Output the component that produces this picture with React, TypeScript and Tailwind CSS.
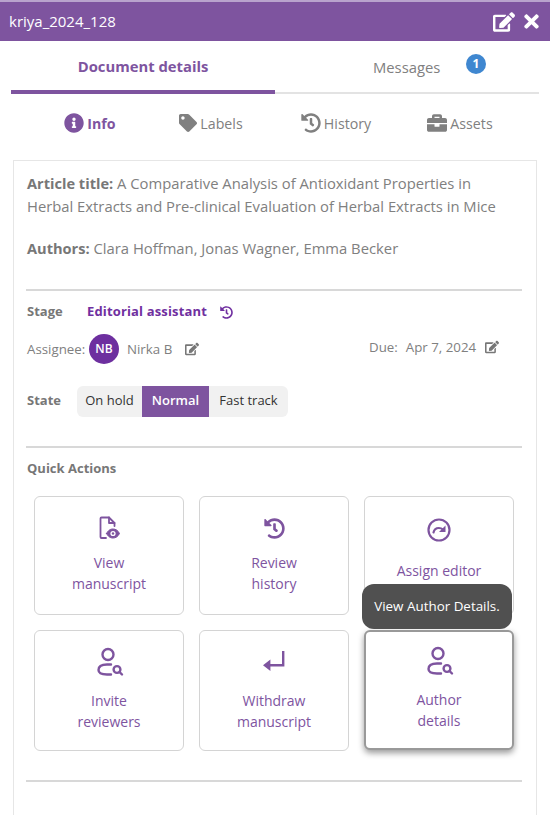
import React from "react";
import { FaEdit, FaTimes, FaInfoCircle, FaTag, FaHistory, FaBriefcase } from "react-icons/fa";

const FileEye = () => (
  <svg width="24" height="24" viewBox="0 0 24 24" fill="none" stroke="#7e549f" strokeWidth="1.800" strokeLinecap="round" strokeLinejoin="round">
    <path d="M9 22H4.500a1 1 0 0 1-1-1V2.500a1 1 0 0 1 1-1H12l5.500 5.500V10" />
    <path d="M12 1.500V7h5.500" />
    <path d="M9.500 17.500c1.700-3.300 3.800-4.500 6.500-4.500s4.800 1.200 6.500 4.500c-1.700 3.300-3.800 4.500-6.500 4.500s-4.800-1.200-6.500-4.500z" fill="#7e549f" stroke="#7e549f" strokeWidth="1" />
    <circle cx="16" cy="17.500" r="2.600" fill="#fff" stroke="none" />
    <circle cx="16" cy="17.500" r="1.200" fill="#7e549f" stroke="none" />
  </svg>
);

const UserSearch = () => (
  <svg width="30" height="30" viewBox="0 0 30 30" fill="none" stroke="#7e549f" strokeWidth="2.400" strokeLinecap="round">
    <circle cx="14" cy="7.500" r="5.500" />
    <path d="M17 17.500H13C8 17.500 4.500 19.500 4.500 23S8 27.500 13 27.500h4" />
    <circle cx="23" cy="22.500" r="3.400" />
    <path d="M25.500 25l2.500 2.500" />
  </svg>
);

const Withdraw = () => (
  <svg width="24" height="24" viewBox="0 0 24 24" fill="#7e549f">
    <path d="M20 1h2.400v15.400H8.400V21L1 15.200 8.400 9.400v4.600H20z" />
  </svg>
);

const AssignIcon = () => (
  <svg width="24" height="24" viewBox="0 0 24 24" fill="none" stroke="#7e549f" strokeWidth="2.200" strokeLinecap="round">
    <circle cx="12" cy="12" r="10.500" />
    <path d="M6.500 14.500c.7-3 2.800-4.500 5.300-4.500 1.600 0 3 .5 4.200 1.500" />
    <path d="M18.500 7.500v6.500h-6.500z" fill="#7e549f" stroke="none" />
  </svg>
);

const Divider = () => <div className="h-[2px] bg-[#d8d8d8]" />;

function Action({ icon, lines, hot, tall, single }: { icon: React.ReactNode; lines: string[]; hot?: boolean; tall?: boolean; single?: boolean }) {
  return (
    <div
      className={`flex flex-col items-center rounded-[6px] bg-white border text-[14px] leading-[21px] text-[#7e549f] ${
        hot ? "border-2 border-[#999] shadow-[0_3px_6px_rgba(0,0,0,0.4)] h-[120px]" : "border-[#d4d4d4]"
      } ${tall ? "h-[121px]" : "h-[119px]"}`}
    >
      <div className={`h-[30px] flex items-center justify-center ${hot ? "mt-[14px]" : single ? "mt-[18px]" : "mt-[16px]"}`}>{icon}</div>
      <div className={`text-center ${tall || hot ? "mt-[13px]" : single ? "mt-[15px]" : "mt-[9px]"}`}>
        {lines.map((l) => (
          <div key={l}>{l}</div>
        ))}
      </div>
    </div>
  );
}

function SubTab({ icon, label, active, width }: { icon: React.ReactNode; label: string; active?: boolean; width: string }) {
  return (
    <div className={`flex items-center justify-center gap-[3px] ${width} ${active ? "text-[#7e549f] font-bold" : "text-[#808080]"}`}>
      {icon}
      <span>{label}</span>
    </div>
  );
}

export default function App() {
  return (
    <div className="w-[550px] h-[815px] overflow-hidden bg-white font-['Open_Sans',sans-serif] flex flex-col">
      <div className="h-[2px] bg-[#b9a3cd]" />
      <div className="h-[39px] bg-[#7e549f] flex items-center justify-between pl-[9px] pr-[8px] text-white text-[15px]">
        <span>kriya_2024_128</span>
        <div className="flex items-center gap-[6px]">
          <FaEdit size={22} />
          <FaTimes size={21} />
        </div>
      </div>

      <div className="mx-[11px] mt-[1px] h-[52px] flex border-b-[2px] border-[#e3e3e3]">
        <div className="w-[264px] h-[52px] border-b-[4px] border-[#7e549f] flex items-center justify-center font-bold text-[14.800px] text-[#7e549f]">
          Document details
        </div>
        <div className="relative flex-1 flex items-center text-[14.800px] text-[#808080]">
          <span className="ml-[98px]">Messages</span>
          <span className="absolute left-[191px] top-[12px] w-[20px] h-[20px] rounded-full bg-[#3f87d0] text-white text-[12px] font-bold flex items-center justify-center">1</span>
        </div>
      </div>

      <div className="h-[66px] flex items-center pl-[30px] text-[14.200px] pb-[7px]">
        <SubTab width="w-[120px]" active label="Info" icon={<FaInfoCircle size={20} />} />
        <SubTab width="w-[122px]" label="Labels" icon={<FaTag size={18} />} />
        <SubTab width="w-[128px]" label="History" icon={<FaHistory size={20} />} />
        <SubTab width="w-[120px]" label="Assets" icon={<FaBriefcase size={20} />} />
      </div>

      <div className="mx-[13px] flex-1 border border-b-0 border-[#e6e6e6] pl-[12px] pr-[14px] pt-[11px]">
        <div className="pl-[1px] pr-[10px] text-[14.800px] leading-[23px] text-[#808080] font-normal">
          <p>
            <b className="font-bold text-[14.600px] text-[#777]">Article title:</b> A Comparative Analysis of Antioxidant Properties in Herbal Extracts and Pre-clinical Evaluation of Herbal Extracts in Mice
          </p>
          <p className="mt-[19px]">
            <b className="font-bold text-[14.600px] text-[#777]">Authors:</b> Clara Hoffman, Jonas Wagner, Emma Becker
          </p>
        </div>

        <div className="mt-[29px]"><Divider /></div>

        <div className="pl-[1px] mt-[12px] flex items-center text-[13px] font-bold h-[18px]">
          <span className="w-[60px] text-[#777]">Stage</span>
          <span className="text-[#7030a0] tracking-[0.15px]">Editorial assistant</span>
          <FaHistory size={13} className="ml-[13px] text-[#7030a0]" />
        </div>

        <div className="pl-[1px] mt-[13px] flex items-start text-[13.300px] text-[#808080] h-[32px]">
          <span className="mt-[6px] w-[62px]">Assignee:</span>
          <span className="w-[30px] h-[30px] rounded-full bg-[#6d2f9f] text-white text-[12px] font-semibold flex items-center justify-center">NB</span>
          <span className="ml-[8px] mt-[6px] w-[58px]">Nirka B</span>
          <FaEdit size={14} className="mt-[8px] text-[#777]" />
          <span className="ml-[170px] mt-[4px]">Due:</span>
          <span className="ml-[8px] mt-[4px]">Apr 7, 2024</span>
          <FaEdit size={14} className="ml-[9px] mt-[6px] text-[#777]" />
        </div>

        <div className="pl-[1px] mt-[19px] flex items-center h-[32px]">
          <span className="w-[50px] text-[13px] font-bold text-[#777]">State</span>
          <div className="flex h-[31px] rounded-[6px] bg-[#f1f1f1] overflow-hidden text-[13px] text-[#333]">
            <span className="w-[65px] flex items-center justify-center">On hold</span>
            <span className="w-[67px] flex items-center justify-center bg-[#7e549f] text-white font-semibold">Normal</span>
            <span className="w-[79px] flex items-center justify-center">Fast track</span>
          </div>
        </div>

        <div className="mt-[29px]"><Divider /></div>

        <div className="pl-[1px] mt-[12px] text-[13px] font-bold text-[#777] leading-[17px]">Quick Actions</div>

        <div className="relative mt-[19px] mx-[8px] grid grid-cols-3 gap-x-[15px] gap-y-[15px]">
          <Action icon={<FileEye />} lines={["View", "manuscript"]} />
          <Action icon={<FaHistory size={21} color="#7e549f" />} lines={["Review", "history"]} />
          <Action single icon={<AssignIcon />} lines={["Assign editor"]} />
          <Action tall icon={<UserSearch />} lines={["Invite", "reviewers"]} />
          <Action tall icon={<Withdraw />} lines={["Withdraw", "manuscript"]} />
          <Action hot icon={<UserSearch />} lines={["Author", "details"]} />
          <div className="absolute left-[328px] top-[88px] w-[150px] h-[45px] rounded-[12px] bg-[#505050] text-white text-[13.400px] flex items-center justify-center">
            View Author Details.
          </div>
        </div>

        <div className="mt-[29px]"><Divider /></div>
      </div>
    </div>
  );
}
